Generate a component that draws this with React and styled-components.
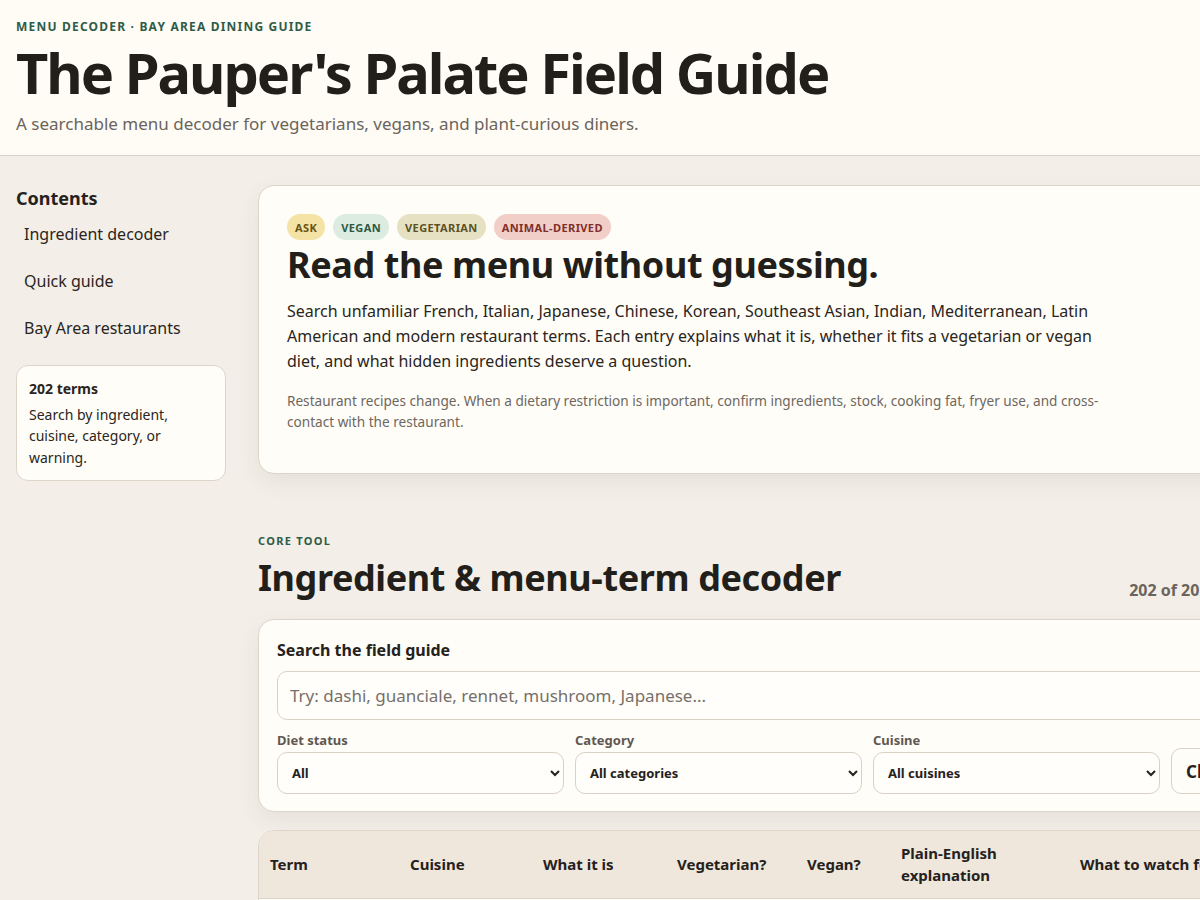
import React from "react";
import styled, { createGlobalStyle } from "styled-components";

const Global = createGlobalStyle`
  * { box-sizing: border-box; }
  html, body { margin: 0; padding: 0; }
  body {
    background: #f3efe8;
    color: #25211d;
    font-family: "Noto Sans", "Open Sans", sans-serif;
    overflow-x: hidden;
  }
`;

const Header = styled.header`
  background: #fffcf6;
  border-bottom: 1px solid #d9d1c6;
  padding: 19px 16px 19px;
  width: 1280px;
`;

const Eyebrow = styled.div`
  font-size: 12px;
  font-weight: 700;
  letter-spacing: 1.2px;
  text-transform: uppercase;
  color: #2f5b47;
  line-height: 16px;
`;

const Title = styled.h1`
  margin: 2px 0 0;
  font-size: 56px;
  line-height: 70px;
  font-weight: 700;
  letter-spacing: -2px;
  color: #221e1a;
`;

const Subtitle = styled.p`
  margin: 5px 0 0;
  font-size: 17px;
  line-height: 24px;
  color: #6b645c;
`;

const Layout = styled.div`
  display: grid;
  grid-template-columns: 210px 1006px;
  gap: 32px;
  padding: 29px 16px 40px;
  align-items: start;
`;

const Sidebar = styled.nav`
  display: flex;
  flex-direction: column;
`;

const SideHeading = styled.div`
  font-size: 18px;
  font-weight: 700;
  line-height: 26px;
`;

const SideLink = styled.a`
  display: block;
  padding: 12px 8px;
  font-size: 16px;
  line-height: 23px;
  color: #2a2520;
  text-decoration: none;
`;

const InfoBox = styled.div`
  margin-top: 13px;
  background: #fffdf8;
  border: 1px solid #ddd5ca;
  border-radius: 12px;
  padding: 12px 12px 12px;
  font-size: 14px;
  line-height: 21.5px;
  color: #2a2520;
`;

const InfoTitle = styled.div`
  font-weight: 700;
  margin-bottom: 4px;
`;

const Main = styled.main`
  display: flex;
  flex-direction: column;
  min-width: 0;
`;

const Card = styled.section`
  background: #fffdf8;
  border: 1px solid #ddd5ca;
  border-radius: 16px;
  box-shadow: 0 8px 22px rgba(60, 45, 25, 0.07);
`;

const Hero = styled(Card)`
  padding: 28px 28px 41px;
`;

const BadgeRow = styled.div`
  display: flex;
  gap: 8px;
`;

const tones = {
  ask: ["#f5e3a6", "#6a5312"],
  vegan: ["#dcece1", "#2d5944"],
  veg: ["#e7e1c4", "#5b5226"],
  animal: ["#f2cec8", "#7e2f2a"],
};

const Badge = styled.span`
  display: inline-flex;
  align-items: center;
  height: 26px;
  padding: 0 8px;
  border-radius: 13px;
  font-size: 11px;
  font-weight: 700;
  letter-spacing: 0.4px;
  text-transform: uppercase;
  background: ${(p) => tones[p.$tone][0]};
  color: ${(p) => tones[p.$tone][1]};
`;

const HeroTitle = styled.h2`
  margin: 3px 0 0;
  font-size: 36px;
  line-height: 44px;
  font-weight: 700;
  letter-spacing: -0.4px;
  color: #221e1a;
`;

const HeroText = styled.p`
  margin: 12px 0 0;
  max-width: 820px;
  font-size: 16px;
  line-height: 25px;
  color: #2a2520;
`;

const Note = styled.p`
  margin: 16px 0 0;
  max-width: 820px;
  font-size: 13.6px;
  line-height: 21px;
  color: #6e675f;
`;

const Section = styled.section`
  margin-top: 59px;
  display: flex;
  flex-direction: column;
`;

const SectionHead = styled.div`
  display: flex;
  justify-content: space-between;
  align-items: flex-end;
`;

const SectionEyebrow = styled(Eyebrow)`
  font-size: 11px;
  letter-spacing: 1.3px;
`;

const SectionTitle = styled.h2`
  margin: 7px 0 0;
  font-size: 36px;
  line-height: 44px;
  font-weight: 700;
  letter-spacing: -0.4px;
  color: #221e1a;
`;

const Count = styled.div`
  font-size: 16px;
  font-weight: 700;
  color: #6b645c;
  margin-bottom: -1px;
  padding-right: 4px;
`;

const SearchCard = styled(Card)`
  margin-top: 19px;
  padding: 19px 18px 17px;
`;

const SearchLabel = styled.label`
  display: block;
  font-size: 16px;
  font-weight: 700;
  line-height: 22px;
  margin-bottom: 10px;
`;

const SearchInput = styled.input`
  width: 100%;
  height: 49px;
  border: 1px solid #d9d1c5;
  border-radius: 10px;
  background: #fffefb;
  padding: 0 12px;
  font-family: inherit;
  font-size: 17px;
  color: #25211d;
  &::placeholder { color: #77706a; }
`;

const Filters = styled.div`
  margin-top: 11px;
  display: grid;
  grid-template-columns: repeat(3, 287px) 1fr;
  gap: 11px;
  align-items: end;
`;

const Field = styled.label`
  display: flex;
  flex-direction: column;
  gap: 3px;
  font-size: 13px;
  font-weight: 700;
  color: #5f5850;
`;

const Select = styled.select`
  height: 42px;
  border: 1px solid #d9d1c5;
  border-radius: 10px;
  background: #fffefb;
  padding: 0 10px;
  font-family: inherit;
  font-size: 13px;
  font-weight: 700;
  color: #25211d;
`;

const ClearButton = styled.button`
  height: 46px;
  border: 1px solid #d9d1c5;
  border-radius: 10px;
  background: #fffdf8;
  font-family: inherit;
  font-size: 17px;
  font-weight: 700;
  color: #25211d;
  text-align: left;
  padding: 0 14px;
`;

const TableWrap = styled.div`
  margin-top: 18px;
  border: 1px solid #ddd5ca;
  border-radius: 16px;
  overflow: hidden;
  background: #fffdf8;
`;

const Table = styled.table`
  width: 100%;
  border-collapse: collapse;
  table-layout: fixed;
`;

const Th = styled.th`
  background: #efe7db;
  text-align: left;
  padding: 10px 12px 10px 11px;
  font-size: 15px;
  font-weight: 700;
  line-height: 22px;
  height: 67px;
  color: #25211d;
  border-bottom: 1px solid #ddd5ca;
`;

const Td = styled.td`
  padding: 12px 12px 12px 11px;
  font-size: 14px;
  line-height: 21px;
  vertical-align: top;
  border-bottom: 1px solid #e6dfd4;
`;

const cols = [
  ["Term", 140],
  ["Cuisine", 133],
  ["What it is", 134],
  ["Vegetarian?", 130],
  ["Vegan?", 94],
  ["Plain-English explanation", 179],
  ["What to watch for", 196],
];

const rows = [
  ["Aioli", "French", "Sauce", "Usually", "No", "Garlic emulsion, typically with egg yolk.", "Egg; sometimes anchovy."],
  ["Anchovy", "Mediterranean", "Fish", "No", "No", "Small salted fish.", "Hidden in dressings and sauces."],
];

export default function App() {
  return (
    <>
      <Global />
      <Header>
        <Eyebrow>Menu decoder · Bay Area dining guide</Eyebrow>
        <Title>The Pauper's Palate Field Guide</Title>
        <Subtitle>A searchable menu decoder for vegetarians, vegans, and plant-curious diners.</Subtitle>
      </Header>
      <Layout>
        <Sidebar>
          <SideHeading>Contents</SideHeading>
          <SideLink href="#decoder">Ingredient decoder</SideLink>
          <SideLink href="#quick">Quick guide</SideLink>
          <SideLink href="#restaurants">Bay Area restaurants</SideLink>
          <InfoBox>
            <InfoTitle>202 terms</InfoTitle>
            Search by ingredient, cuisine, category, or warning.
          </InfoBox>
        </Sidebar>
        <Main>
          <Hero>
            <BadgeRow>
              <Badge $tone="ask">Ask</Badge>
              <Badge $tone="vegan">Vegan</Badge>
              <Badge $tone="veg">Vegetarian</Badge>
              <Badge $tone="animal">Animal-derived</Badge>
            </BadgeRow>
            <HeroTitle>Read the menu without guessing.</HeroTitle>
            <HeroText>
              Search unfamiliar French, Italian, Japanese, Chinese, Korean, Southeast Asian, Indian, Mediterranean, Latin
              American and modern restaurant terms. Each entry explains what it is, whether it fits a vegetarian or vegan
              diet, and what hidden ingredients deserve a question.
            </HeroText>
            <Note>
              Restaurant recipes change. When a dietary restriction is important, confirm ingredients, stock, cooking fat,
              fryer use, and cross-contact with the restaurant.
            </Note>
          </Hero>
          <Section id="decoder">
            <SectionHead>
              <div>
                <SectionEyebrow>Core tool</SectionEyebrow>
                <SectionTitle>Ingredient &amp; menu-term decoder</SectionTitle>
              </div>
              <Count>202 of 202 terms</Count>
            </SectionHead>
            <SearchCard>
              <SearchLabel>Search the field guide</SearchLabel>
              <SearchInput placeholder="Try: dashi, guanciale, rennet, mushroom, Japanese..." />
              <Filters>
                <Field>
                  Diet status
                  <Select defaultValue="all">
                    <option value="all">All</option>
                  </Select>
                </Field>
                <Field>
                  Category
                  <Select defaultValue="all">
                    <option value="all">All categories</option>
                  </Select>
                </Field>
                <Field>
                  Cuisine
                  <Select defaultValue="all">
                    <option value="all">All cuisines</option>
                  </Select>
                </Field>
                <ClearButton>Clear</ClearButton>
              </Filters>
            </SearchCard>
            <TableWrap>
              <Table>
                <colgroup>
                  {cols.map(([c, w]) => (
                    <col key={c} style={{ width: w }} />
                  ))}
                </colgroup>
                <thead>
                  <tr>
                    {cols.map(([c]) => (
                      <Th key={c}>{c}</Th>
                    ))}
                  </tr>
                </thead>
                <tbody>
                  {rows.map((r) => (
                    <tr key={r[0]}>
                      {r.map((v, i) => (
                        <Td key={i}>{v}</Td>
                      ))}
                    </tr>
                  ))}
                </tbody>
              </Table>
            </TableWrap>
          </Section>
        </Main>
      </Layout>
    </>
  );
}
